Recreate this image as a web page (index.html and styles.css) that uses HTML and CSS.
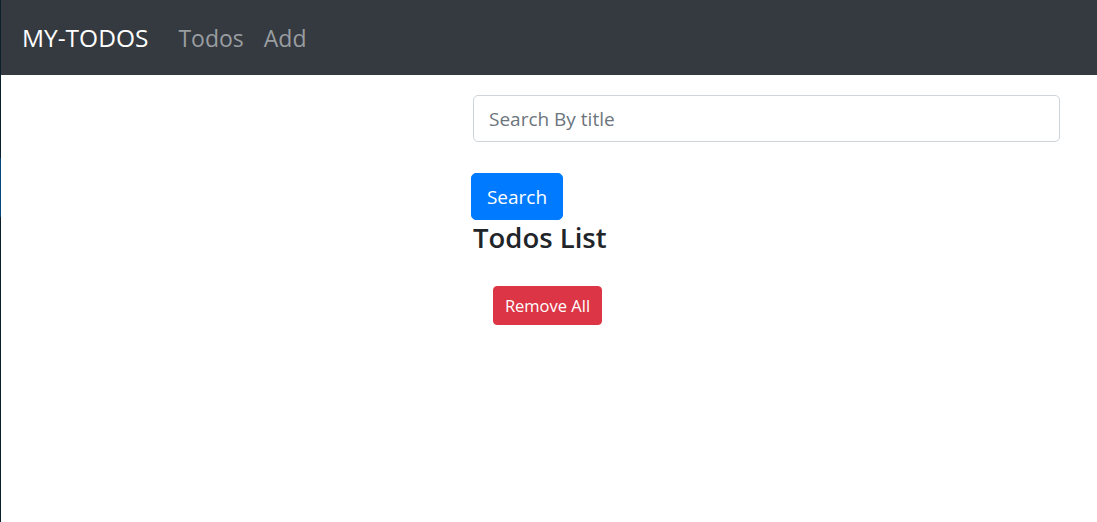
FILE: index.html
```html
<!DOCTYPE html>
<html lang="en">
<head>
<meta charset="utf-8">
<title>MY-TODOS</title>
<link rel="stylesheet" href="styles.css">
</head>
<body>
<div class="edge"><span class="edge-blue"></span></div>
<nav class="navbar">
  <a class="brand" href="#">MY-TODOS</a>
  <a class="nav-link" href="#">Todos</a>
  <a class="nav-link" href="#">Add</a>
</nav>
<main class="content">
  <input class="search-input" type="text" placeholder="Search By title">
  <button class="btn btn-primary" type="button">Search</button>
  <h4 class="title">Todos List</h4>
  <button class="btn btn-danger btn-sm" type="button">Remove All</button>
</main>
</body>
</html>
```
FILE: styles.css
```css
* { box-sizing: border-box; }
html, body { margin: 0; padding: 0; }
body {
  font-family: "Open Sans", "Noto Sans", sans-serif;
  color: #212529;
  background: #fff;
  width: 1097px;
  height: 522px;
  overflow: hidden;
  position: relative;
}
.edge {
  position: absolute;
  left: 0;
  top: 0;
  width: 1px;
  height: 522px;
  background: #0b1f2d;
}
.edge-blue {
  position: absolute;
  left: 0;
  top: 158px;
  width: 1px;
  height: 59px;
  background: #05497c;
}
.navbar {
  height: 75px;
  background: #343a40;
  display: flex;
  align-items: center;
  padding: 0 22px;
}
.brand {
  color: #fff;
  text-decoration: none;
  font-size: 24.5px;
  margin-right: 20px;
}
.nav-link {
  color: #9a9da0;
  text-decoration: none;
  font-size: 23px;
  padding: 0 10px;
}
.content {
  margin-left: 473px;
  width: 587px;
  padding-top: 20px;
  display: flex;
  flex-direction: column;
  align-items: flex-start;
}
.search-input {
  width: 587px;
  height: 47px;
  border: 1px solid #ced4da;
  border-radius: 5px;
  padding: 0 15px;
  font-family: inherit;
  font-size: 19px;
  color: #495057;
  outline: none;
}
.search-input::placeholder { color: #6c757d; }
.btn {
  border: 1px solid transparent;
  color: #fff;
  font-family: inherit;
  cursor: pointer;
}
.btn-primary {
  background: #007bff;
  border-color: #007bff;
  margin-top: 31px;
  margin-left: -2px;
  height: 47px;
  width: 92px;
  border-radius: 5px;
  font-size: 19px;
  padding: 0;
}
.title {
  margin: 0 0 10px;
  font-size: 27.5px;
  font-weight: 600;
  line-height: 36px;
}
.btn-danger {
  background: #dc3545;
  border-color: #dc3545;
  margin: 20px 0 0 20px;
  height: 39px;
  width: 109px;
  border-radius: 4px;
  font-size: 16.5px;
  padding: 0;
}
```
